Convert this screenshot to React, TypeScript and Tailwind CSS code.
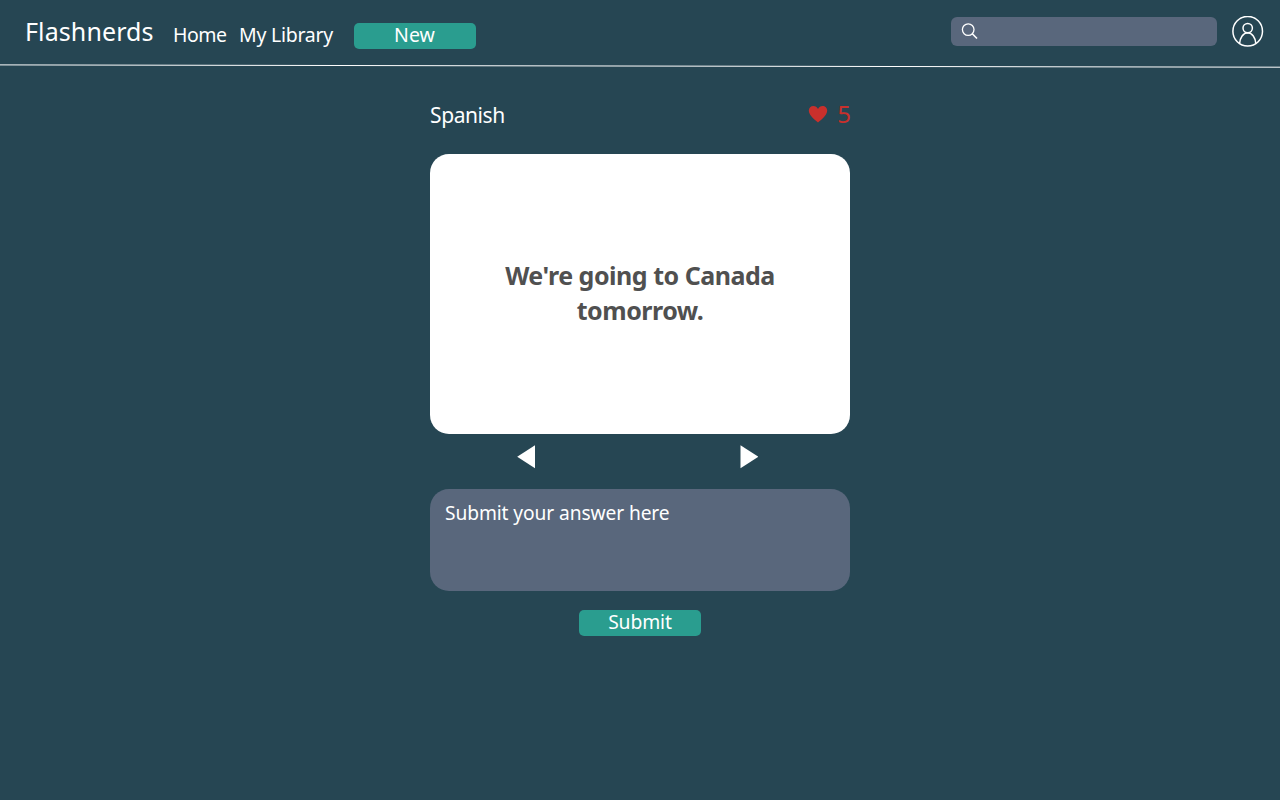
import React from "react";

function SearchIcon() {
  return (
    <svg width="18" height="18" viewBox="0 0 18 18" fill="none" stroke="white" strokeWidth="1.3" className="shrink-0">
      <circle cx="7.2" cy="7.6" r="5.8" />
      <path d="M11.3 11.7 L16 16.5" strokeWidth="1.6" />
    </svg>
  );
}

function ProfileIcon() {
  return (
    <svg width="32" height="32" viewBox="0 0 32 32" fill="none" stroke="white" strokeWidth="1.5">
      <circle cx="15.7" cy="15.2" r="14.8" />
      <circle cx="15.7" cy="12.1" r="4.7" />
      <path d="M7.6 27.5 C8 21.5 11.2 16.9 15.7 16.8 C20.2 16.9 23.4 21.5 23.8 27.5" />
    </svg>
  );
}

function Header() {
  return (
    <header className="flex h-16 items-start text-[19.5px] leading-[26px] text-white">
      <h1 className="ml-[25px] mt-[15px] w-[148px] whitespace-nowrap text-[25px] leading-8 tracking-[0.1px]">Flashnerds</h1>
      <nav className="mt-[22px] flex">
        <a className="w-[66px] tracking-[-0.5px]">Home</a>
        <a className="w-[114px] whitespace-nowrap tracking-[-0.25px]">My Library</a>
      </nav>
      <button className="ml-[0.5px] mt-[23px] h-[26px] w-[122px] rounded-[5px] bg-[#2a9d8f] leading-[24px]">
        <span className="block h-[26px]">New</span>
      </button>
      <div className="ml-auto mr-[15px] mt-[16.5px] flex h-[29px] w-[266px] items-center rounded-[6px] bg-[#59677c] pl-[10px]">
        <SearchIcon />
      </div>
      <div className="mr-4 mt-[16px] w-[32px]">
        <ProfileIcon />
      </div>
    </header>
  );
}

export default function App() {
  return (
    <div className="flex h-[800px] w-full flex-col overflow-hidden bg-[#264653] font-['Noto_Sans',sans-serif]">
      <Header />
      <svg width="1280" height="5" viewBox="0 0 1280 5" className="block shrink-0">
        <line x1="0" y1="0.9" x2="1280" y2="3.2" stroke="white" strokeWidth="1" />
      </svg>
      <main className="mx-auto flex w-[420px] flex-col">
        <div className="flex h-[85px] items-start justify-between">
          <h2 className="mt-[31px] text-[21px] leading-[30px] tracking-[-0.4px] text-white">Spanish</h2>
          <div className="mt-[29px] flex text-[24px] leading-8 text-[#c9302c]">
            <svg width="20" height="18" viewBox="0 0 20 18" fill="#c9302c" className="mr-[9px] mt-[7px]">
              <path d="M10 17.4 C8.5 16.2 0.8 10.7 0.8 5.8 C0.8 2.9 2.9 1 5.4 1 C7.4 1 9.1 2 10 3.9 C10.9 2 12.6 1 14.6 1 C17.1 1 19.2 2.9 19.2 5.8 C19.2 10.7 11.5 16.2 10 17.4 Z" />
            </svg>
            <span className="tracking-[-1px]">5</span>
          </div>
        </div>
        <section className="flex h-[280px] items-center justify-center rounded-[19px] bg-white pb-[2px]">
          <p className="w-[320px] text-center text-[25px] font-bold leading-[35px] tracking-[-0.48px] text-[#505050]">
            We're going to Canada tomorrow.
          </p>
        </section>
        <div className="flex h-[55px] items-start justify-between pl-[87px] pr-[92px] pt-[11px]">
          <svg width="18" height="24" viewBox="0 0 18 24" fill="white">
            <path d="M0.2 11.8 L18 0.3 V23.2 Z" />
          </svg>
          <svg width="18.5" height="24" viewBox="0 0 18.5 24" fill="white">
            <path d="M18.3 11.8 L0.5 0.3 V23.2 Z" />
          </svg>
        </div>
        <textarea
          className="block h-[102px] resize-none rounded-[19px] bg-[#59677c] px-[15px] pt-[11px] text-[19.2px] leading-[26px] tracking-[-0.1px] text-white outline-none placeholder:text-white"
          placeholder="Submit your answer here"
        />
        <button className="mx-auto mt-[19px] h-[26px] w-[122px] rounded-[5px] bg-[#2a9d8f] text-[19.3px] leading-[23px] tracking-[-0.1px] text-white">
          <span className="block h-[26px]">Submit</span>
        </button>
      </main>
    </div>
  );
}
